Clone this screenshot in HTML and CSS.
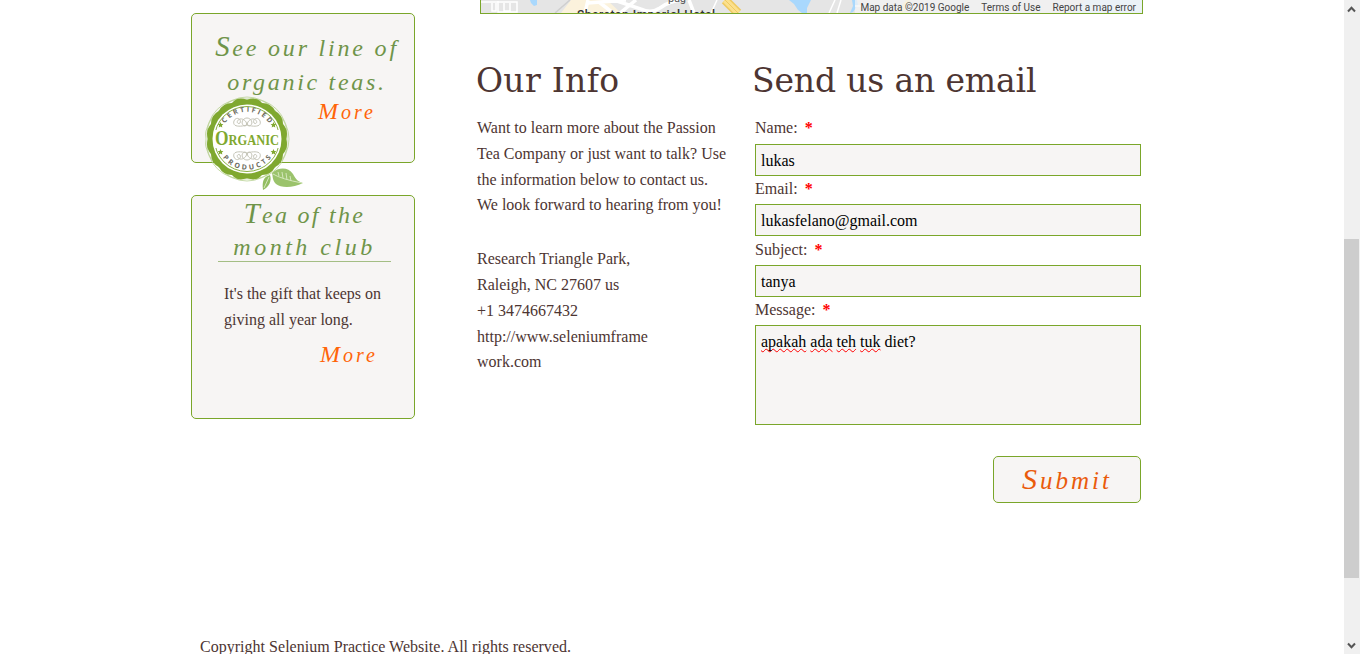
FILE: index.html
```html
<!DOCTYPE html>
<html lang="en">
<head>
<meta charset="utf-8">
<title>Passion Tea Company - Contact</title>
<link rel="stylesheet" href="styles.css">
</head>
<body>
<div class="viewport">
  <div class="page">
    <div class="columns">
      <aside class="sidebar">
        <section class="card card-organic">
          <h2 class="script organic-title"><span class="t1">See our line of</span><br><span class="t2">organic teas.</span></h2>
          <a class="script more more-organic">More</a>
          <svg class="badge" width="100" height="96" viewBox="0 0 100 96">
            <g fill="none" stroke="#b9d294" stroke-width="0.8">
              <ellipse cx="42" cy="43" rx="42" ry="38"/>
              <ellipse cx="42" cy="43" rx="42" ry="38" transform="rotate(45 42 43)"/>
              <ellipse cx="42" cy="43" rx="42" ry="38" transform="rotate(90 42 43)"/>
              <ellipse cx="42" cy="43" rx="42" ry="38" transform="rotate(135 42 43)"/>
            </g>
            <path fill="#7fa82f" d="M42 4Q51 0 57 7Q66 7 70 15Q78 19 78 28Q84 35 81 43Q84 51 78 58Q78 67 70 71Q66 79 57 79Q51 86 42 82Q33 86 27 79Q18 79 14 71Q6 67 6 58Q0 51 3 43Q0 35 6 28Q6 19 14 15Q18 7 27 7Q33 0 42 4Z"/>
            <circle cx="42" cy="43" r="34.5" fill="#fff"/>
            <circle cx="42" cy="43" r="32.5" fill="none" stroke="#7fa82f" stroke-width="0.9"/>
            <g fill="none" stroke="#c5c5b8" stroke-width="1">
              <path d="M42 29C35 31 27 31 29 25C31 20 37 23 35 27C33 29 30 25 35 23C40 22 44 29 40 30C35 29 37 22 42 22C47 22 49 29 44 30C40 29 44 22 49 23C54 25 51 29 49 27C47 23 53 20 55 25C57 31 49 31 42 29"/>
              <path d="M42 57C35 55 27 55 29 61C31 66 37 63 35 59C33 57 30 61 35 63C40 64 44 57 40 56C35 57 37 64 42 64C47 64 49 57 44 56C40 57 44 64 49 63C54 61 51 57 49 59C47 63 53 66 55 61C57 55 49 55 42 57"/>
            </g>
            <path id="arc-top" d="M18 31A26.5 26.5 0 0 1 66 31" fill="none"/>
            <path id="arc-bottom" d="M13.5 54A30.5 30.5 0 0 0 70.5 54" fill="none"/>
            <text class="ring"><textPath href="#arc-top" startOffset="50%" text-anchor="middle" textLength="52">CERTIFIED</textPath></text>
            <text class="ring"><textPath href="#arc-bottom" startOffset="50%" text-anchor="middle" textLength="56">PRODUCTS</textPath></text>
            <rect x="9" y="34" width="66" height="18" fill="#fff"/>
            <text class="organic" x="10" y="49" textLength="64" lengthAdjust="spacingAndGlyphs">Organic</text>
            <g fill="#7fa82f">
              <path id="star" d="M15.500 26l.9 1.900 2 .2-1.500 1.400.4 2-1.800-1-1.800 1 .4-2-1.500-1.400 2-.2z"/>
              <use href="#star" x="53"/><use href="#star" y="27"/><use href="#star" x="53" y="27"/>
            </g>
            <path fill="#93bd62" d="M58 94C57 86 58 81 65 79C67 85 64 91 58 94Z"/>
            <path fill="#9bc36c" d="M67 77C74 71 83 71 88 78C91 84 94 86 98 87C88 92 76 92 71 88C67 84 68 80 67 77Z"/>
            <path fill="none" stroke="#d5e8bd" stroke-width="1" d="M59 92L64 81M68 78Q76 83 97 87M74 80l-1-4M78 82l-1-6M82 84l-1-7M86 85l-1-5"/>
          </svg>
        </section>
        <section class="card card-club">
          <h2 class="script club-title"><span class="t3">Tea of the</span><br><span class="t4">month club</span></h2>
          <p class="club-text">It's the gift that keeps on<br>giving all year long.</p>
          <a class="script more more-club">More</a>
        </section>
      </aside>
      <main class="main">
        <div class="map">
          <svg class="map-art" width="661" height="13" viewBox="0 0 661 13">
            <rect width="661" height="13" fill="#e5e5e5"/>
            <path fill="#fbf2dc" d="M80 13L90 0H106V13ZM106 0h20l14 13h-34z"/>
            <path fill="#a9d8fd" d="M49 0h7v5l-3 1-3-3z M308 0h22l-4 8v5h-5l-4-3-4-6z M371 0h5l1 5-5 7-3 1 3-7z"/>
            <path fill="#d2e9fa" d="M604 0h57v13h-66z"/>
            <path d="M89 0L74 13" stroke="#cfcfcf" stroke-width="1.5"/>
            <g fill="none" stroke="#fff" stroke-width="3.5">
              <path d="M107 0L104 13M107 3L145 0M118 2L132 13M139 13L155 0M133 0L160 9Q170 14 179 8Q190 0 203 0M208 0L213 13"/>
              <path stroke-width="1.5" d="M0 2H36V12H17V1M11 3v8h4V3M23 3v8h6V3M236 0l-6 13M354 0l-6 13M360 0l-4 13M374 6h6"/>
            </g>
            <path d="M244 0L257 13" stroke="#efca61" stroke-width="9"/>
            <path d="M244 0L257 13" stroke="#fbe08d" stroke-width="6"/>
            <path d="M244 0L257 13" stroke="#efca61" stroke-width="1"/>
            <path d="M428 0L418 13" stroke="#fbe7ad" stroke-width="5"/>
            <text class="place" x="187" y="2" textLength="18">pug</text>
            <text class="place hotel" x="96" y="19" textLength="138">Sheraton Imperial Hotel</text>
          </svg>
          <div class="map-legal"><span>Map data ©2019 Google</span><span>Terms of Use</span><span>Report a map error</span></div>
        </div>
        <div class="content">
          <section class="info">
            <h1>Our Info</h1>
            <p>Want to learn more about the Passion<br>Tea Company or just want to talk? Use<br>the information below to contact us.<br>We look forward to hearing from you!</p>
            <p class="address">Research Triangle Park,<br>Raleigh, NC 27607 us<br>+1 3474667432<br>http://www.seleniumframe<br>work.com</p>
          </section>
          <form class="form">
            <h1 class="send">Send us an email</h1>
            <label>Name: <b>*</b></label>
            <div class="field">lukas</div>
            <label>Email: <b>*</b></label>
            <div class="field">lukasfelano@gmail.com</div>
            <label class="tall">Subject: <b>*</b></label>
            <div class="field">tanya</div>
            <label>Message: <b>*</b></label>
            <div class="field message"><u>apakah</u> <u>ada</u> <u>teh</u> <u>tuk</u> diet?</div>
            <button class="script submit" type="button">Submit</button>
          </form>
        </div>
      </main>
    </div>
    <footer class="footer">Copyright Selenium Practice Website. All rights reserved.</footer>
  </div>
  <div class="scrollbar">
    <svg width="16" height="17" viewBox="0 0 16 17"><path d="M4 11.5L7.5 7.8L11 11.5" fill="none" stroke="#555" stroke-width="2"/></svg>
    <div class="thumb"></div>
    <svg width="16" height="17" viewBox="0 0 16 17"><path d="M4 6.5L7.5 10.2L11 6.5" fill="none" stroke="#555" stroke-width="2"/></svg>
  </div>
</div>
</body>
</html>
```
FILE: styles.css
```css
* { box-sizing: border-box; }
body {
  margin: 0;
  background: #fff;
  color: #4d3532;
  font: 16px/25.8px "Liberation Serif", "Times New Roman", serif;
}
h1, h2, p { margin: 0; font-weight: normal; }
.viewport { display: flex; height: 654px; overflow: hidden; }
.page { flex: 1; padding-left: 191px; }
.columns { display: flex; height: 634px; }
.sidebar { width: 224px; padding-top: 13px; }
.card {
  position: relative;
  background: #f7f5f4;
  border: 1px solid #7aa62a;
  border-radius: 5px;
}
.card-organic { height: 150px; margin-bottom: 32px; }
.card-club { height: 224px; }
.script {
  font-family: "Liberation Serif", "Times New Roman", serif;
  font-style: italic;
  font-weight: normal;
  white-space: nowrap;
}
.script::first-letter { font-size: 1.2em; line-height: 1; }
.organic-title, .club-title { color: #6f9449; font-size: 24px; text-align: center; }
.organic-title { padding: 17px 0 0 8px; line-height: 34px; }
.club-title {
  width: 173px;
  margin-left: 26px;
  height: 66px;
  padding-top: 3px;
  line-height: 32px;
  border-bottom: 1px solid #a4be84;
}
.t1 { letter-spacing: 2.8px; }
.t2 { letter-spacing: 2.7px; }
.t3 { letter-spacing: 2.3px; }
.t4 { letter-spacing: 3.5px; }
.more { display: block; color: #ff6408; font-size: 20px; letter-spacing: 3px; line-height: 26px; }
.more-organic { margin-left: 126px; }
.more-club { margin: 9px 0 0 128px; }
.club-text { padding: 19px 0 0 32px; white-space: nowrap; }
.badge { position: absolute; left: 13px; top: 82px; }
.ring { font: bold 7px "Open Sans", sans-serif; fill: #6b6b60; }
.organic { font: bold 21px "Liberation Serif", serif; font-variant: small-caps; fill: #7fa82f; }
.main { margin-left: 61px; width: 667px; }
.map {
  position: relative;
  height: 14px;
  margin-left: 4px;
  border: 1px solid #7aa62a;
  border-top: 0;
  overflow: hidden;
}
.map-art { display: block; }
.place { font: 11px Roboto, sans-serif; fill: #555; }
.hotel { font-size: 12px; font-weight: 500; fill: #333; }
.map-legal {
  position: absolute;
  right: 0;
  top: 0;
  display: flex;
  gap: 12px;
  padding: 0 6px 0 5px;
  background: rgba(245, 245, 245, .7);
  color: #444;
  font: 10px/15px Roboto, sans-serif;
}
.content { display: flex; }
h1 {
  height: 100px;
  padding-top: 45px;
  font: 33px/44px "DejaVu Serif", serif;
  letter-spacing: 0.3px;
  white-space: nowrap;
}
.info { width: 279px; }
.info p { padding-left: 1px; white-space: nowrap; }
.info .address { padding: 28px 0 0 1px; }
.form { width: 386px; display: flex; flex-direction: column; }
h1.send { margin-left: -3px; letter-spacing: -0.15px; }
label { height: 28px; line-height: 25px; }
.info h1 + p { margin-top: 1px; }
.send + label { margin-top: 1px; height: 29px; }
label b { margin-left: 3px; color: #f00; }
.tall { height: 29px; line-height: 27px; }
.field {
  height: 32px;
  padding: 0 5px;
  background: #f7f5f4;
  border: 1px solid #7aa62a;
  color: #000;
  line-height: 31px;
}
.message { height: 100px; line-height: 32px; }
.message u { text-decoration: underline wavy #f00 1px; text-decoration-skip-ink: none; }
.submit {
  align-self: flex-end;
  width: 148px;
  height: 47px;
  margin-top: 31px;
  background: #f7f5f4;
  border: 1px solid #7aa62a;
  border-radius: 5px;
  color: #ea5b0c;
  font-size: 25px;
  letter-spacing: 3px;
}
.footer { padding-left: 9px; white-space: nowrap; letter-spacing: .02px; }
.scrollbar { width: 16px; background: #f0f0f0; display: flex; flex-direction: column; }
.scrollbar svg { flex: none; }
.thumb { width: 15px; height: 339px; margin: 222px 0 59px; background: #cdcdcd; }
```
